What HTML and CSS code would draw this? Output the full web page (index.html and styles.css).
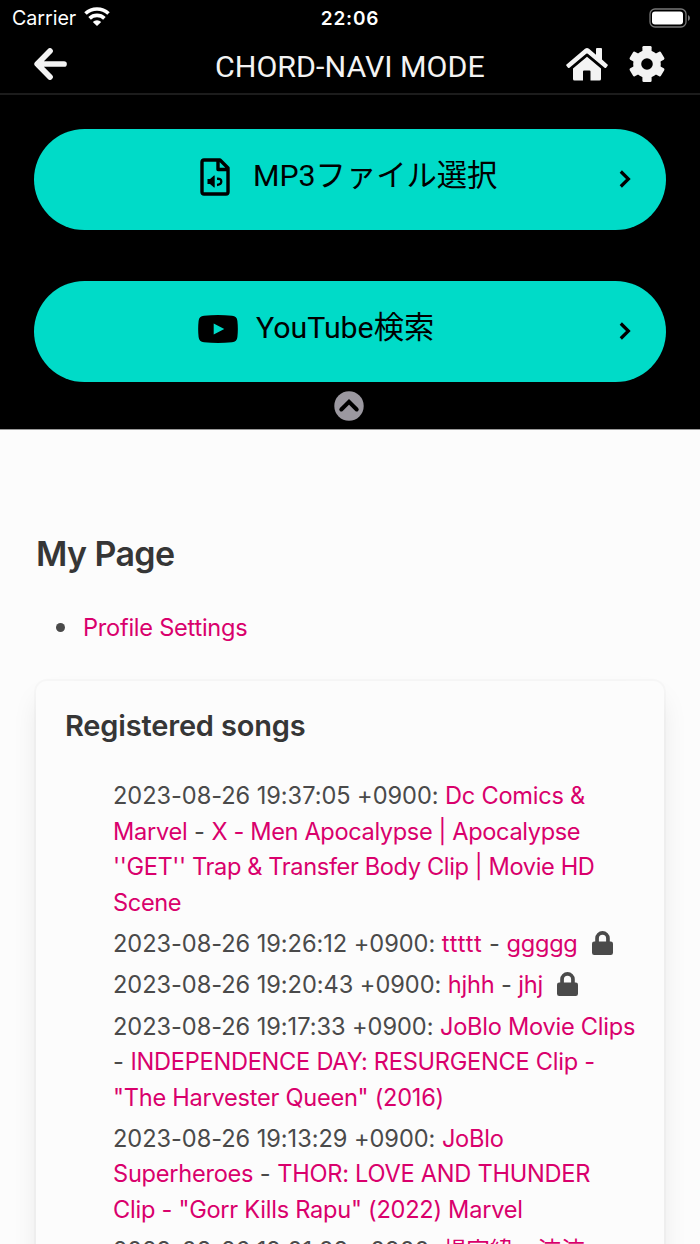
FILE: index.html
```html
<!DOCTYPE html>
<html lang="ja">
<head>
<meta charset="utf-8">
<title>CHORD-NAVI MODE</title>
<link rel="stylesheet" href="styles.css">
</head>
<body>
<div class="top">
  <div class="status">
    <div class="carrier"><span>Carrier</span>
      <svg class="wifi" viewBox="0 0 26 19"><g fill="none" stroke="#fff" stroke-width="3.700"><path d="M1.500 6.500A17 17 0 0 1 24.500 6.500"/><path d="M5.600 11.400A10.800 10.800 0 0 1 20.400 11.400"/></g><path d="M8.800 14.900a6 6 0 0 1 8.400 0L13 19z" fill="#fff"/></svg>
    </div>
    <div class="clock">22:06</div>
    <svg class="battery" viewBox="0 0 42 20"><rect x="1" y="1" width="36" height="18" rx="5" fill="none" stroke="#777" stroke-width="1.3"/><rect x="3" y="3.500" width="31" height="13" rx="3" fill="#fff"/><path d="M39 7v6q2-1 2-3t-2-3z" fill="#777"/></svg>
  </div>
  <div class="nav">
    <svg class="back" viewBox="0 0 34 32"><path d="M16 3 3.200 16 16 29M3.500 16H30" fill="none" stroke="#f3f3f3" stroke-width="5.700" stroke-linecap="round" stroke-linejoin="round"/></svg>
    <div class="nav-title">CHORD-NAVI MODE</div>
    <svg class="home" viewBox="0 0 42 34"><g fill="#f3f3f3"><path d="M21 9.800 7 21.500V32q0 1.500 1.500 1.500H17V24.500q0-1 1-1h5.500q1 0 1 1v9h9q1.500 0 1.500-1.500V21.500z"/><path d="M.5 17.400 19 1.800q2-1.500 4 0l7 5.900V2q0-1 1-1h4q1 0 1 1v10.500l5.500 4.900q.7.600.1 1.300l-1.500 2q-.7.700-1.500.1L21.800 6.700q-.8-.6-1.600 0L3.500 20.800q-.8.600-1.500-.1L.4 18.700q-.5-.700.1-1.300z"/></g></svg>
    <svg class="gear" viewBox="-18 -18 36 36"><circle r="9.800" fill="none" stroke="#f3f3f3" stroke-width="8"/><g fill="#f3f3f3"><rect x="-4.600" y="-18" width="9.200" height="8" rx="1.300"/><rect x="-4.600" y="-18" width="9.200" height="8" rx="1.300" transform="rotate(60)"/><rect x="-4.600" y="-18" width="9.200" height="8" rx="1.300" transform="rotate(120)"/><rect x="-4.600" y="-18" width="9.200" height="8" rx="1.300" transform="rotate(180)"/><rect x="-4.600" y="-18" width="9.200" height="8" rx="1.300" transform="rotate(240)"/><rect x="-4.600" y="-18" width="9.200" height="8" rx="1.300" transform="rotate(300)"/></g></svg>
  </div>
  <div class="actions">
    <div class="button">
      <svg class="file" viewBox="0 0 30 38"><path d="M4 2h16l8 8v24q0 2-2 2H4q-2 0-2-2V4q0-2 2-2zM18 2v9.500H28" fill="none" stroke="#000" stroke-width="3.400" stroke-linejoin="round"/><path d="M7.500 21h2.500l4-3.500h.7v12H14l-4-3.600H7.500z"/><path d="M17 20.800q4.300-.3 4.300 2.700T17 27" fill="none" stroke="#000" stroke-width="2.300"/></svg>
      <span class="label label-mp3">MP3ファイル選択</span>
      <svg class="chevron" viewBox="0 0 12 20"><path d="m1.800 2.500 7.600 7.500-7.600 7.500" fill="none" stroke="#000" stroke-width="3.200"/></svg>
    </div>
    <div class="button">
      <svg class="youtube" viewBox="0 0 40 28"><path fill-rule="evenodd" d="M6 .7Q20-.5 34 .7q5 .3 5.400 5.300.9 8 0 16-.4 5-5.400 5.300-14 1.200-28 0Q1 27 .6 22q-.9-8 0-16Q1 1 6 .7zM15.700 8.500v11l10.600-5.500z"/></svg>
      <span class="label label-yt">YouTube検索</span>
      <svg class="chevron" viewBox="0 0 12 20"><path d="m1.800 2.500 7.600 7.500-7.600 7.500" fill="none" stroke="#000" stroke-width="3.200"/></svg>
    </div>
  </div>
  <svg class="collapse" viewBox="0 0 30 30"><circle cx="15" cy="15" r="14.700" fill="#9b98a0"/><path d="m7.300 18.500 7.700-7.600 7.700 7.600" fill="none" stroke="#000" stroke-width="4" stroke-linecap="round"/></svg>
</div>
<main class="page">
  <h1 class="title">My Page</h1>
  <ul class="links"><li><a class="link">Profile Settings</a></li></ul>
  <section class="card">
    <h2 class="subtitle">Registered songs</h2>
    <ul class="songs">
      <li>2023-08-26 19:37:05 +0900: <a class="link">Dc Comics &amp;<br>Marvel</a> - <a class="link link-tight">X - Men Apocalypse | Apocalypse<br>''GET'' Trap &amp; Transfer Body Clip | Movie HD<br>Scene</a></li>
      <li>2023-08-26 19:26:12 +0900: <a class="link link-wide">ttttt</a> - <a class="link">ggggg</a><svg class="lock" viewBox="0 0 21 24"><path fill="#4a4a4a" fill-rule="evenodd" d="M3.200 10.500V7.300a7.300 7.300 0 0 1 14.600 0v3.200h1q2.200 0 2.200 2.200V21.800Q21 24 18.800 24H2.200Q0 24 0 21.800v-9.100q0-2.200 2.200-2.200zm3.700 0h7.200V7.300a3.600 3.600 0 0 0-7.200 0z"/></svg></li>
      <li>2023-08-26 19:20:43 +0900: <a class="link">hjhh</a> - <a class="link">jhj</a><svg class="lock" viewBox="0 0 21 24"><path fill="#4a4a4a" fill-rule="evenodd" d="M3.200 10.500V7.300a7.300 7.300 0 0 1 14.600 0v3.200h1q2.200 0 2.200 2.200V21.800Q21 24 18.800 24H2.200Q0 24 0 21.800v-9.100q0-2.200 2.200-2.200zm3.700 0h7.200V7.300a3.600 3.600 0 0 0-7.200 0z"/></svg></li>
      <li>2023-08-26 19:17:33 +0900: <a class="link">JoBlo Movie Clips</a><br>- <a class="link">INDEPENDENCE DAY: RESURGENCE Clip -<br>"The Harvester Queen" (2016)</a></li>
      <li>2023-08-26 19:13:29 +0900: <a class="link">JoBlo<br>Superheroes</a> - <a class="link">THOR: LOVE AND THUNDER<br>Clip - "Gorr Kills Rapu" (2022) Marvel</a></li>
      <li>2023-08-26 19:01:08 +0900: <a class="link link-cjk">楊宗緯 - 涼涼</a></li>
    </ul>
  </section>
</main>
</body>
</html>
```
FILE: styles.css
```css
* { box-sizing: border-box; }
body { margin: 0; width: 700px; height: 1244px; overflow: hidden; background: #fcfcfc; color: #4a4a4a; font-family: Inter, "Noto Sans CJK JP", sans-serif; }
svg { display: block; flex: none; }
.top { height: 430px; background: #000; color: #fff; border-bottom: 1px solid #999; }
.status { height: 35px; padding: 0 10px 0 12px; display: grid; grid-template-columns: 1fr auto 1fr; align-items: center; }
.carrier { display: flex; align-items: center; gap: 8px; font-size: 19.700px; letter-spacing: -.05px; }
.wifi { width: 26px; height: 19px; margin-top: -2px; }
.clock { font-size: 19px; font-weight: 600; letter-spacing: .8px; margin: 1px 1px 0 -1px; }
.battery { width: 42px; height: 20px; justify-self: end; margin-right: -1px; }
.nav { height: 60px; display: flex; align-items: center; border-bottom: 2px solid #1c1c1c; font-family: Roboto, sans-serif; color: #f3f3f3; }
.back { width: 34px; height: 32px; margin: 0 0 0 34px; }
.nav-title { width: 270px; margin: 4px 0 0 147px; font-size: 30.400px; white-space: nowrap; }
.home { width: 42px; height: 34px; margin-left: 81px; }
.gear { width: 36px; height: 36px; margin-left: 21px; }
.actions { padding: 34px 34px 0; display: flex; flex-direction: column; gap: 51px; }
.button { height: 101px; border-radius: 51px; background: #00dbc8; color: #000; display: flex; align-items: center; padding: 0 35px 0 163px; font-family: Roboto, "Noto Sans CJK JP", sans-serif; }
.file { width: 30px; height: 38px; margin: -6px 0 0 3px; }
.youtube { width: 40px; height: 28px; margin: -6px 0 0 1px; }
.label { font-size: 30.300px; line-height: 40px; white-space: nowrap; margin-top: -8px; }
.label-mp3 { margin-left: 23px; }
.label-yt { margin-left: 18px; }
.chevron { width: 12px; height: 20px; margin: -1px 0 0 auto; }
.collapse { width: 30px; height: 30px; margin: 9px auto 0 334px; }
.page { padding: 101px 36px 0; }
.title { margin: 0; font-size: 34px; line-height: 46px; font-weight: 600; color: #363636; letter-spacing: -.600px; }
.links { margin: 33px 0 0; padding: 0 0 0 20px; list-style: none; font-size: 23.600px; line-height: 35.400px; }
.links li { display: flex; align-items: center; gap: 18px; }
.links li::before { content: ""; width: 9px; height: 9px; border-radius: 50%; background: #4a4a4a; }
.link { color: #d9006c; letter-spacing: -.260px; }
.link-tight { letter-spacing: -.370px; }
.link-wide { letter-spacing: .9px; }
.link-cjk { letter-spacing: 0; }
.card { margin-top: 36px; height: 620px; padding: 22px 29px 0; border-radius: 11px; background: #fcfcfc; box-shadow: 0 15px 28px -4px rgba(10,10,10,.1), 0 0 0 2px rgba(10,10,10,.02); }
.subtitle { margin: 0; font-size: 29px; line-height: 46px; font-weight: 600; color: #363636; letter-spacing: -.180px; }
.songs { list-style: none; margin: 29px 0 0; padding: 0 0 0 48px; font-size: 23.600px; line-height: 35.400px; white-space: nowrap; letter-spacing: -.050px; }
.songs li + li { margin-top: 6px; }
.lock { display: inline-block; width: 21px; height: 24px; margin-left: 14px; vertical-align: -3px; }
```
